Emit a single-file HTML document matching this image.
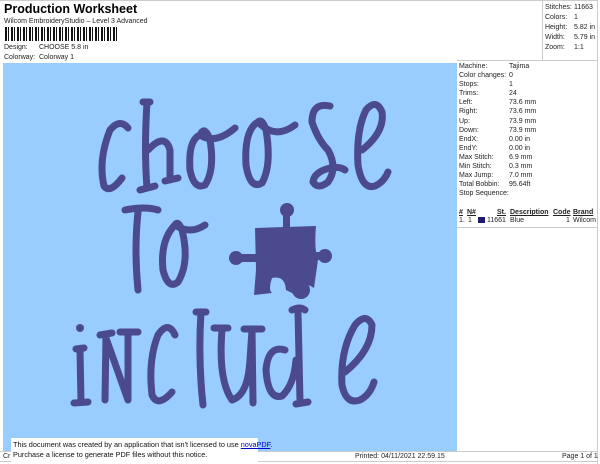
<!DOCTYPE html>
<html><head><style>
body{margin:0;width:600px;height:464px;background:#fff;position:relative;overflow:hidden;font-family:"Liberation Sans",sans-serif;color:#222}
.a{position:absolute;white-space:nowrap;font-size:7px;line-height:9px}
</style></head><body>
<div class="a" style="left:4px;top:1px;font-size:12.5px;font-weight:bold;line-height:16px;color:#000">Production Worksheet</div>
<div class="a" style="left:4px;top:17px">Wilcom EmbroideryStudio – Level 3 Advanced</div>
<div style="position:absolute;left:5px;top:27px;width:112px;height:14px;background:repeating-linear-gradient(90deg,#111 0 2px,#fff 2px 3px,#111 3px 4px,#fff 4px 6px)"></div>
<div class="a" style="left:4px;top:43px">Design:</div><div class="a" style="left:39px;top:43px">CHOOSE 5.8 in</div>
<div class="a" style="left:4px;top:53px">Colorway:</div><div class="a" style="left:39px;top:53px">Colorway 1</div>
<div style="position:absolute;left:0;top:0;width:597px;height:1px;background:#ccc"></div>
<div style="position:absolute;left:3px;top:63px;width:454px;height:388px;background:#99ccff"></div>
<div style="position:absolute;left:597px;top:0;width:1px;height:464px;background:#ccc"></div>
<div style="position:absolute;left:542px;top:0;width:1px;height:60px;background:#ccc"></div>
<div style="position:absolute;left:457px;top:60px;width:141px;height:1px;background:#ccc"></div>
<div style="position:absolute;left:457px;top:227px;width:141px;height:1px;background:#ccc"></div>
<div style="position:absolute;left:0;top:451px;width:598px;height:1px;background:#ccc"></div>
<div style="position:absolute;left:0;top:461px;width:598px;height:1px;background:#ccc"></div>
<div class="a" style="left:545px;top:3px;line-height:10px">Stitches:<br>Colors:<br>Height:<br>Width:<br>Zoom:</div>
<div class="a" style="left:574px;top:3px;line-height:10px">11663<br>1<br>5.82 in<br>5.79 in<br>1:1</div>
<div class="a" style="left:459px;top:62px;line-height:9.1px">Machine:<br>Color changes:<br>Stops:<br>Trims:<br>Left:<br>Right:<br>Up:<br>Down:<br>EndX:<br>EndY:<br>Max Stitch:<br>Min Stitch:<br>Max Jump:<br>Total Bobbin:<br>Stop Sequence:</div>
<div class="a" style="left:509px;top:62px;line-height:9.1px">Tajima<br>0<br>1<br>24<br>73.6 mm<br>73.6 mm<br>73.9 mm<br>73.9 mm<br>0.00 in<br>0.00 in<br>6.9 mm<br>0.3 mm<br>7.0 mm<br>95.64ft</div>
<div class="a" style="left:459px;top:208px;font-weight:bold;text-decoration:underline">#</div>
<div class="a" style="left:467px;top:208px;font-weight:bold;text-decoration:underline">N#</div>
<div class="a" style="left:497px;top:208px;font-weight:bold;text-decoration:underline">St.</div>
<div class="a" style="left:510px;top:208px;font-weight:bold;text-decoration:underline">Description</div>
<div class="a" style="left:553px;top:208px;font-weight:bold;text-decoration:underline">Code</div>
<div class="a" style="left:573px;top:208px;font-weight:bold;text-decoration:underline">Brand</div>
<div class="a" style="left:459px;top:216px">1.</div><div class="a" style="left:468px;top:216px">1</div>
<div style="position:absolute;left:478px;top:217px;width:7px;height:6px;background:#1e1a6e"></div>
<div class="a" style="left:487px;top:216px">11661</div><div class="a" style="left:510px;top:216px">Blue</div>
<div class="a" style="left:566px;top:216px">1</div><div class="a" style="left:573px;top:216px">Wilcom</div>
<div class="a" style="left:3px;top:452px">Cr</div>
<div class="a" style="left:355px;top:452px">Printed: 04/11/2021 22.59.15</div>
<div class="a" style="left:562px;top:452px">Page 1 of 1</div>
<div style="position:absolute;left:11px;top:438px;width:247px;height:26px;background:#fff"></div>
<div class="a" style="left:13px;top:440px;color:#111;font-size:7.3px;line-height:10px">This document was created by an application that isn't licensed to use <span style="color:#00c;text-decoration:underline">novaPDF</span>.<br>Purchase a license to generate PDF files without this notice.</div>
<svg style="position:absolute;left:0;top:0" width="600" height="464" viewBox="0 0 600 464">
<g fill="none" stroke="#4b4a8e" stroke-width="7" stroke-linecap="round" stroke-linejoin="round">
<path d="M128 128 Q120 118 110 130 Q98 160 104 186 Q110 194 122 178"/>
<path d="M143 102 L150 102 M147 102 Q144 150 147 188 M140 190 L155 186 M148 150 Q165 132 170 150 L170 180 M165 181 L178 178"/>
<path d="M200 135 Q188 140 190 170 Q194 190 205 185 Q215 170 210 140 Q205 125 200 135 Q215 145 235 128"/>
<path d="M258 122 Q244 130 246 165 Q250 190 262 183 Q272 165 266 130 Q262 118 258 122 Q275 140 295 125"/>
<path d="M330 106 Q312 102 312 122 Q318 140 328 150 Q338 168 328 182 Q318 190 313 182 Q314 172 330 168 Q340 166 345 170"/>
<path d="M362 150 Q385 132 382 112 Q376 98 366 110 Q356 130 358 165 Q362 190 375 186 Q384 182 388 172"/>
<path d="M125 210 Q145 206 158 210 M138 212 Q134 250 138 290"/>
<path d="M175 225 Q160 240 163 270 Q168 290 178 282 Q190 262 182 230 Q178 220 175 225 Q190 235 205 225"/>
<path d="M76 349 L84 348 M80 350 L81 402 M74 403 L88 402 M100 335 L112 333 M106 335 L105 400 M106 338 L128 400 M128 400 L128 332 M120 332 L138 332 M175 335 Q168 320 158 335 Q148 360 152 395 Q158 408 172 392 M196 312 L206 312 M201 312 Q198 360 203 405 M214 328 L228 328 M222 330 Q218 380 232 400 Q248 395 250 360 L252 330 M244 329 L262 329 M252 330 L253 403 M285 350 Q268 345 266 370 Q268 400 282 396 Q294 385 296 360 M292 310 Q300 306 305 310 M298 312 L300 402 M296 404 L308 402 M345 372 Q372 350 372 325 Q366 312 355 325 Q340 350 342 385 Q346 405 360 400 Q370 395 374 382"/>
</g>
<g fill="#4b4a8e">
<circle cx="80" cy="328" r="4"/>
<circle cx="287" cy="210" r="7"/><rect x="283" y="212" width="7" height="16"/>
<circle cx="236" cy="258" r="7"/><rect x="238" y="254" width="18" height="8"/>
<circle cx="325" cy="256" r="7"/><rect x="312" y="252" width="12" height="8"/>
<path d="M255 228 L316 226 Q314 250 318 260 L314 288 Q302 280 300 290 L298 296 L286 290 Q285 275 272 278 Q268 290 272 293 L254 295 L256 270 Z"/>
<circle cx="301" cy="290" r="9"/>
</g>
</svg>
</body></html>
